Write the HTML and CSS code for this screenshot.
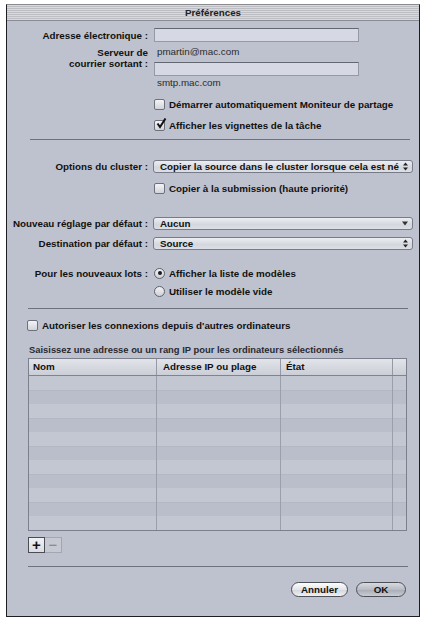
FILE: index.html
```html
<!DOCTYPE html>
<html lang="fr">

<head>
    <meta charset="UTF-8">
    <meta name="viewport" content="width=device-width, initial-scale=1.0">
    <title>Préférences</title>
    <link rel="stylesheet" href="styles.css">
</head>

<body>
    <div class="window">
        <div class="titlebar">Préférences</div>

        <div class="row row-email">
            <div class="label">Adresse électronique :</div>
            <div class="ctl"><div class="field"></div></div>
        </div>

        <div class="row row-server">
            <div class="label label-two">Serveur de<br>courrier sortant :</div>
            <div class="ctl">
                <div class="value">pmartin@mac.com</div>
                <div class="field field-server"></div>
            </div>
        </div>

        <div class="row row-smtp">
            <div class="label"></div>
            <div class="ctl"><div class="value">smtp.mac.com</div></div>
        </div>

        <div class="row row-check1">
            <div class="label"></div>
            <div class="ctl">
                <span class="checkbox"></span>
                <span class="opt">Démarrer automatiquement Moniteur de partage</span>
            </div>
        </div>

        <div class="row row-check2">
            <div class="label"></div>
            <div class="ctl">
                <span class="checkbox checked">
                    <svg width="12" height="12" viewBox="0 0 12 12"><path d="M2.5 5.5 L5 9 L10.5 0.5" fill="none" stroke="#111" stroke-width="2"/></svg>
                </span>
                <span class="opt">Afficher les vignettes de la tâche</span>
            </div>
        </div>

        <div class="sep sep-1"></div>

        <div class="row row-cluster">
            <div class="label">Options du cluster :</div>
            <div class="ctl">
                <div class="popup">
                    <span>Copier la source dans le cluster lorsque cela est né</span>
                    <svg width="5" height="9" viewBox="0 0 5 9"><path d="M0 3.5 L2.5 0.5 L5 3.5Z M0 5.5 L2.5 8.5 L5 5.5Z" fill="#222"/></svg>
                </div>
            </div>
        </div>

        <div class="row row-check3">
            <div class="label"></div>
            <div class="ctl">
                <span class="checkbox"></span>
                <span class="opt">Copier à la submission (haute priorité)</span>
            </div>
        </div>

        <div class="row row-preset">
            <div class="label">Nouveau réglage par défaut :</div>
            <div class="ctl">
                <div class="popup">
                    <span>Aucun</span>
                    <svg width="6" height="5" viewBox="0 0 6 5"><path d="M0 0.5 L6 0.5 L3 4.5Z" fill="#333"/></svg>
                </div>
            </div>
        </div>

        <div class="row row-dest">
            <div class="label">Destination par défaut :</div>
            <div class="ctl">
                <div class="popup">
                    <span>Source</span>
                    <svg width="5" height="9" viewBox="0 0 5 9"><path d="M0 3.5 L2.5 0.5 L5 3.5Z M0 5.5 L2.5 8.5 L5 5.5Z" fill="#222"/></svg>
                </div>
            </div>
        </div>

        <div class="row row-radio1">
            <div class="label">Pour les nouveaux lots :</div>
            <div class="ctl">
                <span class="radio on"></span>
                <span class="opt">Afficher la liste de modèles</span>
            </div>
        </div>

        <div class="row row-radio2">
            <div class="label"></div>
            <div class="ctl">
                <span class="radio"></span>
                <span class="opt">Utiliser le modèle vide</span>
            </div>
        </div>

        <div class="sep sep-2"></div>

        <div class="row row-allow">
            <span class="checkbox"></span>
            <span class="opt">Autoriser les connexions depuis d'autres ordinateurs</span>
        </div>

        <div class="hint">Saisissez une adresse ou un rang IP pour les ordinateurs sélectionnés</div>

        <div class="table">
            <div class="thead">
                <div class="col c1">Nom</div>
                <div class="col c2">Adresse IP ou plage</div>
                <div class="col c3">État</div>
                <div class="col c4"></div>
            </div>
            <div class="tbody">
                <div class="tr"><div class="col c1"></div><div class="col c2"></div><div class="col c3"></div><div class="col c4"></div></div>
                <div class="tr"><div class="col c1"></div><div class="col c2"></div><div class="col c3"></div><div class="col c4"></div></div>
                <div class="tr"><div class="col c1"></div><div class="col c2"></div><div class="col c3"></div><div class="col c4"></div></div>
                <div class="tr"><div class="col c1"></div><div class="col c2"></div><div class="col c3"></div><div class="col c4"></div></div>
                <div class="tr"><div class="col c1"></div><div class="col c2"></div><div class="col c3"></div><div class="col c4"></div></div>
                <div class="tr"><div class="col c1"></div><div class="col c2"></div><div class="col c3"></div><div class="col c4"></div></div>
                <div class="tr"><div class="col c1"></div><div class="col c2"></div><div class="col c3"></div><div class="col c4"></div></div>
                <div class="tr"><div class="col c1"></div><div class="col c2"></div><div class="col c3"></div><div class="col c4"></div></div>
                <div class="tr"><div class="col c1"></div><div class="col c2"></div><div class="col c3"></div><div class="col c4"></div></div>
                <div class="tr"><div class="col c1"></div><div class="col c2"></div><div class="col c3"></div><div class="col c4"></div></div>
                <div class="tr"><div class="col c1"></div><div class="col c2"></div><div class="col c3"></div><div class="col c4"></div></div>
            </div>
        </div>

        <div class="addremove">
            <div class="btn-add">+</div>
            <div class="btn-remove">−</div>
        </div>

        <div class="sep sep-3"></div>

        <div class="buttons">
            <div class="button cancel">Annuler</div>
            <div class="button ok">OK</div>
        </div>
    </div>
</body>

</html>
```

FILE: styles.css
```css
body {
    margin: 0;
    background: #fff;
    font-family: "Liberation Sans", Arial, sans-serif;
    font-size: 9.8px;
    color: #111;
}

.window {
    box-sizing: border-box;
    width: 414px;
    height: 613px;
    margin: 4px 0 0 6px;
    background: #bec2ce;
    border: 1px solid #1e1e22;
    border-top-color: #8c8c90;
}

.titlebar {
    height: 15px;
    line-height: 15px;
    text-align: center;
    font-weight: bold;
    color: #222;
    background: repeating-linear-gradient(#d9d9dc 0 1px, #bdbec3 1px 2px);
    border-bottom: 1px solid #8a8c94;
}

/****FORM ROWS****/

.row {
    display: flex;
    align-items: center;
    font-weight: bold;
}

.label {
    width: 141px;
    flex: none;
    text-align: right;
}

.ctl {
    display: flex;
    align-items: center;
    padding-left: 6px;
}

.row-email {
    margin-top: 7px;
    height: 14px;
}

.field {
    box-sizing: border-box;
    width: 205px;
    height: 14px;
    background: #d6d9e3;
    border: 1px solid #9599a6;
    border-top-color: #636772;
}

.row-server {
    margin-top: 4px;
    align-items: flex-start;
}

.row-server .ctl {
    flex-direction: column;
    align-items: flex-start;
}

.label-two {
    padding-top: 1px;
    line-height: 11px;
}

.value {
    font-weight: normal;
    color: #2a2a2e;
    line-height: 12px;
    padding-left: 3px;
}

.field-server {
    margin-top: 4px;
}

.row-smtp {
    margin-top: 1px;
    height: 12px;
}

.row-check1 {
    margin-top: 9px;
    height: 12px;
}

.row-check2 {
    margin-top: 9px;
    height: 12px;
}

.row-check3 {
    margin-top: 9px;
    height: 12px;
}

.checkbox {
    position: relative;
    box-sizing: border-box;
    width: 11px;
    height: 11px;
    margin-right: 4px;
    border: 1px solid #6d717c;
    border-radius: 2px;
    background: linear-gradient(#f4f4f6, #d2d4da);
}

.checkbox svg {
    position: absolute;
    left: 0;
    top: -3px;
}

.opt {
    white-space: nowrap;
}

.radio {
    position: relative;
    box-sizing: border-box;
    width: 11px;
    height: 11px;
    margin-right: 4px;
    border: 1px solid #5f636d;
    border-radius: 50%;
    background: linear-gradient(#f2f2f4, #cfd1d8);
}

.radio.on::after {
    content: "";
    position: absolute;
    left: 2.5px;
    top: 2.5px;
    width: 4px;
    height: 4px;
    border-radius: 50%;
    background: #1a1a1a;
}

.sep {
    height: 1px;
    width: 380px;
    background: #6e727c;
}

.sep-1 {
    margin: 8px 0 0 23px;
}

.sep-2 {
    margin: 11px 0 0 21px;
}

.sep-3 {
    margin: 13px 0 0 21px;
}

/****POPUPS****/

.row-cluster {
    margin-top: 20px;
    height: 13px;
}

.row-preset {
    margin-top: 23px;
    height: 13px;
}

.row-dest {
    margin-top: 7px;
    height: 13px;
}

.popup {
    box-sizing: border-box;
    display: flex;
    align-items: center;
    justify-content: space-between;
    width: 260px;
    height: 13px;
    margin-left: -1px;
    padding: 0 4px 0 6px;
    border: 1px solid #777b87;
    border-radius: 3px;
    background: linear-gradient(#eceef2, #d4d7de 60%, #dcdfe5);
    white-space: nowrap;
}

.row-radio1 {
    margin-top: 17px;
    height: 12px;
}

.row-radio2 {
    margin-top: 6px;
    height: 12px;
}

/****TABLE****/

.row-allow {
    margin: 10px 0 0 20px;
    height: 12px;
}

.hint {
    margin: 13px 0 0 22px;
    line-height: 12px;
    font-size: 9.4px;
    font-weight: bold;
    color: #2a2a30;
}

.table {
    box-sizing: border-box;
    width: 379px;
    margin: 2px 0 0 21px;
    border: 1px solid #7c808c;
}

.thead {
    display: flex;
    height: 16px;
    line-height: 16px;
    font-weight: bold;
    background: linear-gradient(#e2e4ea, #cbced6);
    border-bottom: 1px solid #80848f;
}

.col {
    box-sizing: border-box;
    flex: none;
    border-right: 1px solid #9599a4;
}

.c1 {
    width: 128px;
    padding-left: 4px;
}

.c2 {
    width: 124px;
    padding-left: 6px;
}

.c3 {
    width: 112px;
    padding-left: 5px;
}

.c4 {
    width: 13px;
    border-right: none;
}

.tr {
    display: flex;
    height: 14px;
    background: #c3c7d2;
}

.tr .col {
    border-right-color: #9b9fab;
}

.tr:nth-child(even) {
    background: #babecA;
    box-shadow: inset 0 1px 0 #b4b8c4;
}

/****BOTTOM****/

.addremove {
    display: flex;
    margin: 6px 0 0 21px;
    height: 16px;
}

.btn-add,
.btn-remove {
    box-sizing: border-box;
    width: 17px;
    height: 16px;
    line-height: 14px;
    text-align: center;
    font-size: 15px;
    font-weight: bold;
}

.btn-add {
    background: linear-gradient(#f0f1f4, #dadce2);
    border: 1px solid #4a4d55;
    color: #111;
}

.btn-remove {
    background: #c6c9d2;
    border: 1px solid #a3a6b0;
    border-left: none;
    color: #7e818a;
    font-weight: normal;
}

.buttons {
    display: flex;
    justify-content: flex-end;
    gap: 8px;
    margin-top: 15px;
    padding-right: 13px;
}

.button {
    box-sizing: border-box;
    height: 15px;
    line-height: 13px;
    text-align: center;
    font-weight: bold;
    border: 1px solid #4e5058;
    border-radius: 8px;
}

.cancel {
    width: 57px;
    background: linear-gradient(#fdfdfd, #e4e5e9 50%, #d3d5db 51%, #eef0f3);
}

.ok {
    width: 50px;
    background: linear-gradient(#d8dae0, #b9bcc5 50%, #a7abb5 51%, #c9ccd3);
}
```
